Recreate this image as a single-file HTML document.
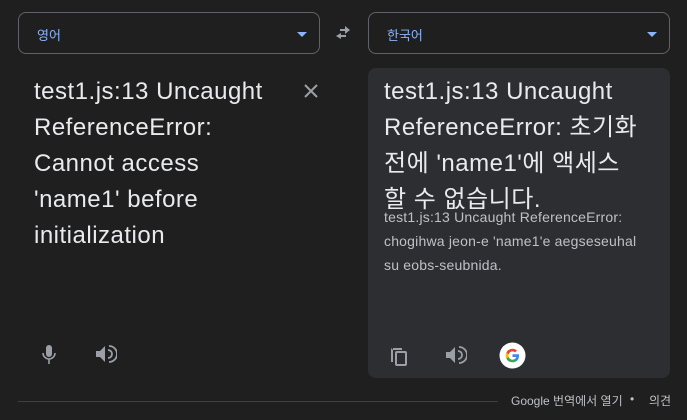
<!DOCTYPE html>
<html><head><meta charset="utf-8"><style>
*{margin:0;padding:0;box-sizing:border-box}
body{width:687px;height:420px;background:#1f1f1f;font-family:"Liberation Sans","Noto Sans CJK KR",sans-serif;position:relative;overflow:hidden;color:#e8eaed}
.sel{position:absolute;top:12px;height:42px;border:1px solid #5f6368;border-radius:8px;color:#8ab4f8;font-size:13px;padding:12px 0 0 18px}
.sel .arr{position:absolute;right:12px;top:19px;width:0;height:0;border-left:5px solid transparent;border-right:5px solid transparent;border-top:5px solid #8ab4f8}
.big{position:absolute;font-size:24px;line-height:36px;color:#e8eaed;letter-spacing:0.5px}
.rp{position:absolute;left:368px;top:68px;width:302px;height:310px;background:#2d2e31;border-radius:8px}
.small{position:absolute;left:384px;top:205px;width:262px;font-size:14px;line-height:24px;color:#bdc1c6;letter-spacing:0.2px}
svg{position:absolute}
.foot{position:absolute;top:392px;font-size:12px;color:#bdc1c6}
</style></head><body>
<div class="sel" style="left:18px;width:302px">영어<span class="arr"></span></div>
<div class="sel" style="left:368px;width:302px">한국어<span class="arr"></span></div>
<svg style="left:332px;top:23px" width="22" height="20" viewBox="0 0 22 20"><path d="M13 3l5 4-5 4V8H8V6h5zM9 10v2h5v2H9v2l-5-3z" fill="#9aa0a6"/></svg>
<div class="big" style="left:34px;top:74px;width:245px">test1.js:13 Uncaught ReferenceError: Cannot access 'name1' before initialization</div>
<svg style="left:302px;top:82px" width="18" height="18" viewBox="0 0 18 18"><path d="M3 3L15 15M15 3L3 15" stroke="#9aa0a6" stroke-width="2"/></svg>
<svg style="left:40px;top:343px" width="18" height="22" viewBox="0 0 18 22"><rect x="6" y="2" width="6" height="12" rx="3" fill="#9aa0a6"/><path d="M3 10a6 6 0 0 0 12 0" stroke="#9aa0a6" stroke-width="1.6" fill="none"/><path d="M9 16v5" stroke="#9aa0a6" stroke-width="1.6"/></svg>
<svg style="left:95px;top:344px" width="22" height="20" viewBox="0 0 22 20"><path d="M1 7h4l5-5v16l-5-5H1z" fill="#9aa0a6"/><path d="M13 6a4 4 0 0 1 0 8" stroke="#9aa0a6" stroke-width="1.8" fill="none"/><path d="M14 2a8 8 0 0 1 0 16" stroke="#9aa0a6" stroke-width="1.8" fill="none"/></svg>
<div class="rp"></div>
<div class="big" style="left:384px;top:74px;width:265px">test1.js:13 Uncaught ReferenceError: 초기화 전에 'name1'에 액세스 할 수 없습니다.</div>
<div class="small">test1.js:13 Uncaught ReferenceError: chogihwa jeon-e 'name1'e aegseseuhal su eobs-seubnida.</div>
<svg style="left:388px;top:344px" width="22" height="22" viewBox="0 0 22 22"><path d="M3 4v14h2V4z M3 4h11v2H5" fill="#9aa0a6"/><rect x="8" y="8" width="10" height="13" rx="1" fill="none" stroke="#9aa0a6" stroke-width="2"/></svg>
<svg style="left:445px;top:345px" width="22" height="20" viewBox="0 0 22 20"><path d="M1 7h4l5-5v16l-5-5H1z" fill="#9aa0a6"/><path d="M13 6a4 4 0 0 1 0 8" stroke="#9aa0a6" stroke-width="1.8" fill="none"/><path d="M14 2a8 8 0 0 1 0 16" stroke="#9aa0a6" stroke-width="1.8" fill="none"/></svg>
<svg style="left:499px;top:342px" width="27" height="27" viewBox="0 0 27 27"><circle cx="13.5" cy="13.5" r="13" fill="#fff"/>
<path d="M20 13.7c0-.5 0-1-.1-1.4h-6.4v2.7h3.7a3.2 3.2 0 0 1-1.4 2.1v1.7h2.2c1.3-1.2 2-3 2-5.1z" fill="#4285f4"/>
<path d="M13.5 20.3c1.8 0 3.4-.6 4.5-1.6l-2.2-1.7c-.6.4-1.4.7-2.3.7-1.8 0-3.3-1.2-3.8-2.8H7.4v1.8a6.8 6.8 0 0 0 6.1 3.6z" fill="#34a853"/>
<path d="M9.7 14.9a4 4 0 0 1 0-2.7v-1.8H7.4a6.8 6.8 0 0 0 0 6.2z" fill="#fbbc05"/>
<path d="M13.5 9.4c1 0 1.9.4 2.6 1l1.9-1.9a6.6 6.6 0 0 0-4.5-1.8c-2.7 0-5 1.5-6.1 3.7l2.3 1.8c.5-1.6 2-2.8 3.8-2.8z" fill="#ea4335"/></svg>
<div style="position:absolute;left:18px;top:401px;width:480px;height:1px;background:#3c4043"></div>
<div class="foot" style="left:511px">Google 번역에서 열기</div>
<div class="foot" style="left:630px">•</div>
<div class="foot" style="left:649px">의견</div>
</body></html>
